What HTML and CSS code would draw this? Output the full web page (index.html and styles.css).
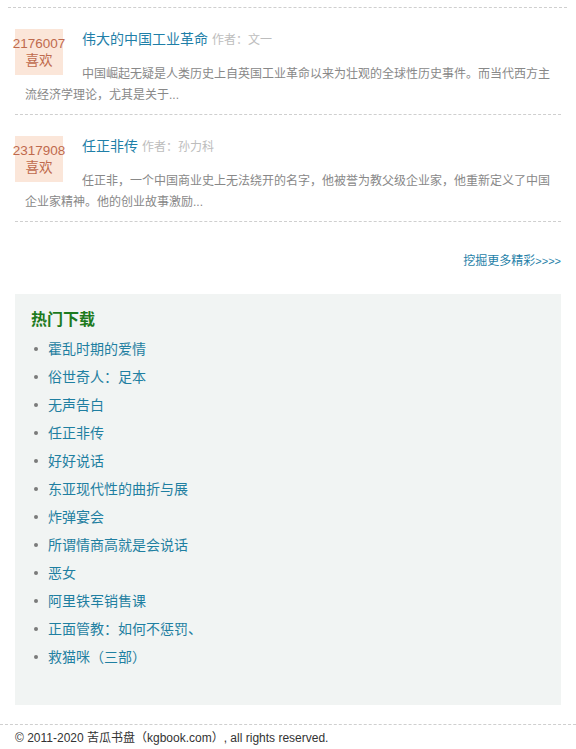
FILE: index.html
```html
<!DOCTYPE html>
<html lang="zh-CN">
<head>
<meta charset="utf-8">
<title>苦瓜书盘</title>
<link rel="stylesheet" href="styles.css">
</head>
<body>
<div class="top-rule"></div>
<div class="books">
  <div class="book">
    <div class="like"><div>2176007</div><div>喜欢</div></div>
    <div class="book-title"><a class="title-link" href="#">伟大的中国工业革命</a> <span class="author">作者：文一</span></div>
    <p class="desc">中国崛起无疑是人类历史上自英国工业革命以来为壮观的全球性历史事件。而当代西方主流经济学理论，尤其是关于...</p>
  </div>
  <div class="book">
    <div class="like"><div>2317908</div><div>喜欢</div></div>
    <div class="book-title"><a class="title-link" href="#">任正非传</a> <span class="author">作者：孙力科</span></div>
    <p class="desc">任正非，一个中国商业史上无法绕开的名字，他被誉为教父级企业家，他重新定义了中国企业家精神。他的创业故事激励...</p>
  </div>
</div>
<div class="more"><a href="#">挖掘更多精彩<span class="arrows">&gt;&gt;&gt;&gt;</span></a></div>
<div class="hot">
  <h3 class="hot-title">热门下载</h3>
  <ul class="hot-list">
    <li><a href="#">霍乱时期的爱情</a></li>
    <li><a href="#">俗世奇人：足本</a></li>
    <li><a href="#">无声告白</a></li>
    <li><a href="#">任正非传</a></li>
    <li><a href="#">好好说话</a></li>
    <li><a href="#">东亚现代性的曲折与展</a></li>
    <li><a href="#">炸弹宴会</a></li>
    <li><a href="#">所谓情商高就是会说话</a></li>
    <li><a href="#">恶女</a></li>
    <li><a href="#">阿里铁军销售课</a></li>
    <li><a href="#">正面管教：如何不惩罚、</a></li>
    <li><a href="#">救猫咪（三部）</a></li>
  </ul>
</div>
<div class="footer">© 2011-2020 苦瓜书盘（kgbook.com）, all rights reserved.</div>
</body>
</html>
```
FILE: styles.css
```css
html, body {
  margin: 0;
  padding: 0;
  background: #fff;
}
body {
  font-family: "Liberation Sans", "Noto Sans CJK SC", sans-serif;
  font-size: 12px;
  color: #333;
}
a {
  text-decoration: none;
}
.top-rule {
  margin: 7px 9px 0 8px;
  border-top: 1px dashed #cfcfcf;
}
.books {
  margin: 0 15px;
}
.book {
  padding: 21px 0 8px;
  border-bottom: 1px dashed #cfcfcf;
}
.like {
  float: left;
  width: 48px;
  padding: 6px 0;
  margin-right: 19px;
  background: #fbe6d9;
  color: #bf6a4d;
  font-size: 13.5px;
  line-height: 17px;
  text-align: center;
  white-space: nowrap;
  display: flex;
  flex-direction: column;
  align-items: center;
}
.book-title {
  line-height: 20px;
  font-size: 14px;
}
.title-link {
  color: #1f7fa8;
}
.author {
  color: #bdbdbd;
  font-size: 12px;
}
.desc {
  margin: 14px 0 0;
  padding-left: 10px;
  line-height: 21px;
  color: #888;
  font-size: 12px;
}
.more {
  margin: 29px 15px 0;
  text-align: right;
  line-height: 20px;
}
.more a {
  color: #1f7fa8;
  font-size: 12px;
}
.arrows {
  font-size: 11px;
}
.hot {
  margin: 23px 15px 0;
  padding: 14px 16px 34px;
  background: #f1f4f3;
}
.hot-title {
  margin: 0;
  font-size: 16px;
  line-height: 24px;
  font-weight: bold;
  color: #1d7a1d;
}
.hot-list {
  list-style: none;
  margin: 3px 0 0;
  padding: 0 0 0 3px;
}
.hot-list li {
  display: flex;
  align-items: center;
  line-height: 28px;
  font-size: 14px;
}
.hot-list li::before {
  content: "";
  width: 4px;
  height: 4px;
  border-radius: 50%;
  background: #7a7a7a;
  margin-right: 10px;
  flex: none;
}
.hot-list a {
  color: #1f7fa1;
}
.footer {
  margin-top: 19px;
  border-top: 1px dashed #cfcfcf;
  padding: 3px 15px 0;
  line-height: 20px;
  font-size: 12px;
  color: #333;
}
```
